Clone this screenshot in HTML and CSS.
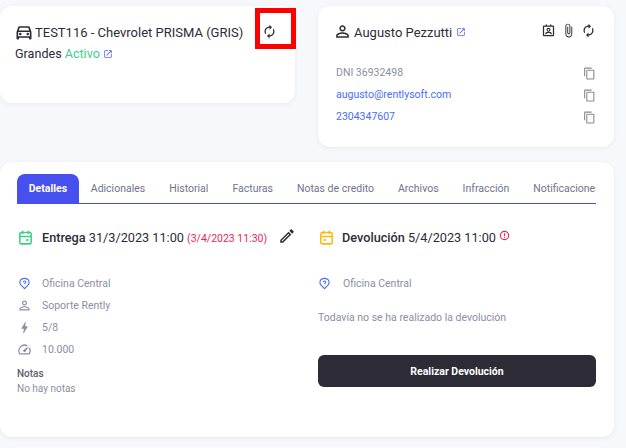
FILE: index.html
```html
<!DOCTYPE html>
<html lang="es">
<head>
    <meta charset="UTF-8">
    <title>Reserva</title>
    <link rel="stylesheet" href="styles.css">
</head>
<body>
    <div class="top-row">
        <div class="card car-card">
            <div class="car-title">
                <svg class="icon-car" viewBox="0 0 24 24"><path d="M18.92 6.01C18.72 5.42 18.16 5 17.5 5h-11c-.66 0-1.21.42-1.42 1.01L3 12v8c0 .55.45 1 1 1h1c.55 0 1-.45 1-1v-1h12v1c0 .55.45 1 1 1h1c.55 0 1-.45 1-1v-8l-2.08-5.99zM6.85 7h10.29l1.08 3.11H5.77L6.85 7zM19 17H5v-5h14v5z"/><circle cx="7.5" cy="14.5" r="1.5"/><circle cx="16.5" cy="14.5" r="1.5"/></svg>
                <span>TEST116 - Chevrolet PRISMA (GRIS)</span>
                <svg class="icon-sync" viewBox="0 0 24 24"><path d="M12 6v3l4-4-4-4v3c-4.42 0-8 3.58-8 8 0 1.57.46 3.03 1.24 4.26L6.7 14.8c-.45-.83-.7-1.79-.7-2.8 0-3.31 2.69-6 6-6zm6.76 1.74L17.3 9.2c.44.84.7 1.79.7 2.8 0 3.31-2.69 6-6 6v-3l-4 4 4 4v-3c4.42 0 8-3.58 8-8 0-1.57-.46-3.03-1.24-4.26z"/></svg>
            </div>
            <div class="car-sub">
                Grandes <span class="active">Activo</span>
                <svg class="icon-link" viewBox="0 0 24 24"><path d="M19 19H5V5h7V3H5c-1.11 0-2 .9-2 2v14c0 1.1.89 2 2 2h14c1.1 0 2-.9 2-2v-7h-2v7zM14 3v2h3.59l-9.83 9.83 1.41 1.41L19 6.41V10h2V3h-7z"/></svg>
            </div>
            <div class="marker"></div>
        </div>

        <div class="card client-card">
            <div class="client-head">
                <svg class="icon-person" viewBox="0 0 24 24"><path d="M12 5.9c1.16 0 2.1.94 2.1 2.1s-.94 2.1-2.1 2.1S9.9 9.16 9.9 8s.94-2.1 2.1-2.1m0 9c2.97 0 6.1 1.46 6.1 2.1v1.1H5.9V17c0-.64 3.13-2.1 6.1-2.1M12 4C9.79 4 8 5.79 8 8s1.79 4 4 4 4-1.79 4-4-1.79-4-4-4zm0 9c-2.67 0-8 1.34-8 4v3h16v-3c0-2.66-5.33-4-8-4z"/></svg>
                <span class="client-name">Augusto Pezzutti</span>
                <svg class="icon-link" viewBox="0 0 24 24"><path d="M19 19H5V5h7V3H5c-1.11 0-2 .9-2 2v14c0 1.1.89 2 2 2h14c1.1 0 2-.9 2-2v-7h-2v7zM14 3v2h3.59l-9.83 9.83 1.41 1.41L19 6.41V10h2V3h-7z"/></svg>
                <div class="client-actions">
                    <svg class="icon-action" viewBox="0 0 24 24"><path d="M19 4h-2.500V2.500h-2V4h-5V2.500h-2V4H5C3.900 4 3 4.900 3 6v13c0 1.100.9 2 2 2h14c1.100 0 2-.9 2-2V6c0-1.100-.9-2-2-2zm0 15H5V6h14v13z"/><g class="badge-person"><circle cx="12" cy="10.800" r="2.300"/><path d="M7.500 18c0-2 3-3 4.500-3s4.500 1 4.500 3"/></g></svg>
                    <svg class="icon-action" viewBox="0 0 24 24"><path d="M16.5 6v11.5c0 2.21-1.79 4-4 4s-4-1.79-4-4V5c0-1.38 1.12-2.5 2.5-2.5s2.5 1.12 2.5 2.5v10.5c0 .55-.45 1-1 1s-1-.45-1-1V6H10v9.5c0 1.38 1.12 2.5 2.5 2.5s2.5-1.12 2.5-2.5V5c0-2.21-1.79-4-4-4S7 2.79 7 5v12.5c0 3.04 2.46 5.5 5.5 5.5s5.5-2.46 5.5-5.5V6h-1.5z"/></svg>
                    <svg class="icon-action" viewBox="0 0 24 24"><path d="M12 6v3l4-4-4-4v3c-4.42 0-8 3.58-8 8 0 1.57.46 3.03 1.24 4.26L6.7 14.8c-.45-.83-.7-1.79-.7-2.8 0-3.31 2.69-6 6-6zm6.76 1.74L17.3 9.2c.44.84.7 1.79.7 2.8 0 3.31-2.69 6-6 6v-3l-4 4 4 4v-3c4.42 0 8-3.58 8-8 0-1.57-.46-3.03-1.24-4.26z"/></svg>
                </div>
            </div>
            <div class="client-row">
                <span>DNI 36932498</span>
                <svg class="icon-copy" viewBox="0 0 24 24"><path d="M16 1H4c-1.1 0-2 .9-2 2v14h2V3h12V1zm3 4H8c-1.1 0-2 .9-2 2v14c0 1.1.9 2 2 2h11c1.1 0 2-.9 2-2V7c0-1.1-.9-2-2-2zm0 16H8V7h11v14z"/></svg>
            </div>
            <div class="client-row blue">
                <span>augusto@rentlysoft.com</span>
                <svg class="icon-copy" viewBox="0 0 24 24"><path d="M16 1H4c-1.1 0-2 .9-2 2v14h2V3h12V1zm3 4H8c-1.1 0-2 .9-2 2v14c0 1.1.9 2 2 2h11c1.1 0 2-.9 2-2V7c0-1.1-.9-2-2-2zm0 16H8V7h11v14z"/></svg>
            </div>
            <div class="client-row blue">
                <span>2304347607</span>
                <svg class="icon-copy" viewBox="0 0 24 24"><path d="M16 1H4c-1.1 0-2 .9-2 2v14h2V3h12V1zm3 4H8c-1.1 0-2 .9-2 2v14c0 1.1.9 2 2 2h11c1.1 0 2-.9 2-2V7c0-1.1-.9-2-2-2zm0 16H8V7h11v14z"/></svg>
            </div>
        </div>
    </div>

    <div class="card main-card">
        <div class="tabs">
            <div class="tab selected">Detalles</div>
            <div class="tab">Adicionales</div>
            <div class="tab">Historial</div>
            <div class="tab">Facturas</div>
            <div class="tab">Notas de credito</div>
            <div class="tab">Archivos</div>
            <div class="tab">Infracción</div>
            <div class="tab">Notificaciones</div>
        </div>

        <div class="columns">
            <div class="col">
                <div class="date-line">
                    <svg class="icon-date green" viewBox="0 0 24 24"><path d="M6 5h12a2 2 0 0 1 2 2v12a2 2 0 0 1-2 2H6a2 2 0 0 1-2-2V7a2 2 0 0 1 2-2zM4 10.500h16M8 2.500V7M16 2.500V7"/><rect class="dot" x="13" y="14" width="3" height="3"/></svg>
                    <span><b>Entrega</b> 31/3/2023 11:00 <small class="late">(3/4/2023 11:30)</small></span>
                    <svg class="icon-edit" viewBox="0 0 24 24"><path d="M14.060 9.020l.92.92L5.920 19H5v-.92l9.060-9.060M17.660 3c-.25 0-.51.1-.7.29l-1.830 1.830 3.750 3.750 1.830-1.830c.39-.39.39-1.020 0-1.410l-2.340-2.340c-.2-.2-.45-.29-.71-.29zm-3.600 3.190L3 17.250V21h3.750L17.810 9.940l-3.750-3.750z"/></svg>
                </div>
                <div class="info-list">
                    <div class="info-row">
                        <svg class="icon-pin" viewBox="0 0 24 24"><path d="M12 21.500 6 15.500C3.500 13 3 10.500 3.600 8.500 4.500 5 8 2.500 12 2.500s7.500 2.500 8.400 6c.6 2-.1 4.500-2.400 7z"/><path d="M9.800 9.500c0-3 4.600-3 4.600 0 0 1.800-2.300 1.700-2.300 3.500M12.100 15.500v.5"/></svg>
                        <span>Oficina Central</span>
                    </div>
                    <div class="info-row">
                        <svg class="icon-info" viewBox="0 0 24 24"><path d="M12 5.900c1.160 0 2.100.94 2.100 2.100s-.94 2.100-2.100 2.100S9.900 9.160 9.900 8s.94-2.100 2.100-2.100m0 9c2.970 0 6.100 1.460 6.100 2.100v1.100H5.900V17c0-.64 3.130-2.100 6.100-2.100M12 4C9.790 4 8 5.790 8 8s1.790 4 4 4 4-1.790 4-4-1.790-4-4-4zm0 9c-2.670 0-8 1.340-8 4v3h16v-3c0-2.660-5.330-4-8-4z"/></svg>
                        <span>Soporte Rently</span>
                    </div>
                    <div class="info-row">
                        <svg class="icon-info" viewBox="0 0 24 24"><path d="M11 21h-1l1-7H7.500c-.88 0-.33-.75-.31-.78C8.480 10.940 10.420 7.540 13.010 3h1l-1 7h3.510c.4 0 .62.19.4.66C12.970 17.550 11 21 11 21z"/></svg>
                        <span>5/8</span>
                    </div>
                    <div class="info-row">
                        <svg class="icon-info" viewBox="0 0 24 24"><path d="M20.380 8.570l-1.230 1.850a8 8 0 0 1-.22 7.580H5.070A8 8 0 0 1 15.580 6.850l1.850-1.230A10 10 0 0 0 3.350 19a2 2 0 0 0 1.720 1h13.850a2 2 0 0 0 1.740-1 10 10 0 0 0-.27-10.440zm-9.790 6.840a2 2 0 0 0 2.830 0l5.660-8.490-8.490 5.660a2 2 0 0 0 0 2.830z"/></svg>
                        <span>10.000</span>
                    </div>
                </div>
                <div class="notes">
                    <div class="notes-title">Notas</div>
                    <div>No hay notas</div>
                </div>
            </div>

            <div class="col col-return">
                <div class="date-line">
                    <svg class="icon-date yellow" viewBox="0 0 24 24"><path d="M6 5h12a2 2 0 0 1 2 2v12a2 2 0 0 1-2 2H6a2 2 0 0 1-2-2V7a2 2 0 0 1 2-2zM4 10.500h16M8 2.500V7M16 2.500V7"/><rect class="dot" x="8" y="14" width="3" height="3"/></svg>
                    <span><b>Devolución</b> 5/4/2023 11:00</span>
                    <svg class="icon-alert" viewBox="0 0 24 24"><circle cx="12" cy="12" r="9"/><path d="M12 7v6.500M12 16v1.500"/></svg>
                </div>
                <div class="info-list">
                    <div class="info-row">
                        <svg class="icon-pin" viewBox="0 0 24 24"><path d="M12 21.500 6 15.500C3.500 13 3 10.500 3.600 8.500 4.500 5 8 2.500 12 2.500s7.500 2.500 8.400 6c.6 2-.1 4.500-2.400 7z"/><path d="M9.800 9.500c0-3 4.600-3 4.600 0 0 1.800-2.300 1.700-2.300 3.500M12.100 15.500v.5"/></svg>
                        <span>Oficina Central</span>
                    </div>
                </div>
                <p class="pending">Todavía no se ha realizado la devolución</p>
                <button class="return-btn">Realizar Devolución</button>
            </div>
        </div>
    </div>
</body>
</html>
```

FILE: styles.css
```css
html, body {
    margin: 0;
    height: 448px;
    overflow: hidden;
}

body {
    padding: 6px 12px 0 0;
    box-sizing: border-box;
    background-color: #f6f8fb;
    color: #2d2c36;
    font-family: Roboto, sans-serif;
    font-size: 10.5px;
}

svg {
    display: block;
    flex-shrink: 0;
    fill: currentColor;
}

.card {
    background-color: #fff;
    border-radius: 12px;
    box-shadow: 0 1px 4px rgba(60, 70, 100, 0.08);
}

.top-row {
    display: flex;
    align-items: flex-start;
    gap: 23px;
}

/* tarjeta del auto */
.car-card {
    position: relative;
    box-sizing: border-box;
    width: 295px;
    height: 97px;
    padding: 17px 0 0 15px;
}

.car-title {
    display: flex;
    align-items: center;
    font-size: 13px;
    line-height: 18px;
}

.icon-car {
    width: 20px;
    height: 20px;
    margin: -1px 1.5px 0 -1.5px;
}

.icon-sync {
    width: 15px;
    height: 15px;
    margin: -2px 0 0 19px;
}

.car-sub {
    display: flex;
    align-items: center;
    gap: 3px;
    margin-top: 3px;
    font-size: 12.6px;
    line-height: 18px;
}

.active {
    color: #3ecf8e;
}

.icon-link {
    width: 10px;
    height: 10px;
    color: #6366f1;
}

.marker {
    position: absolute;
    left: 255px;
    top: 2px;
    width: 31px;
    height: 31px;
    border: 5px solid #ff0000;
}

/* tarjeta del cliente */
.client-card {
    box-sizing: border-box;
    width: 296px;
    height: 141px;
    padding: 17px 18px 0 18px;
}

.client-head {
    display: flex;
    align-items: center;
    height: 18px;
    margin-bottom: 20px;
}

.icon-person {
    width: 19px;
    height: 19px;
    margin: -2px 2px 0 -3px;
}

.client-name {
    font-size: 13px;
    margin-right: 4px;
}

.client-actions {
    display: flex;
    gap: 5px;
    margin: -3px 0 0 auto;
}

.icon-action {
    width: 15px;
    height: 15px;
}

.badge-person {
    fill: none;
    stroke: currentColor;
    stroke-width: 1.8;
}

.client-row {
    display: flex;
    justify-content: space-between;
    align-items: center;
    height: 22px;
    color: #8a8fa3;
}

.client-row.blue {
    color: #4a6cf7;
}

.icon-copy {
    width: 13px;
    height: 13px;
    color: #8a8a94;
    margin-top: 3px;
}

/* tarjeta principal */
.main-card {
    box-sizing: border-box;
    height: 275px;
    margin-top: 15px;
    padding: 12px 18px 0 17px;
}

.tabs {
    display: flex;
    height: 29px;
    border-bottom: 1px solid #4650e8;
    overflow: hidden;
}

.tab {
    flex-shrink: 0;
    padding: 0 12px;
    line-height: 29px;
    color: #70748a;
}

.tab.selected {
    padding: 0 11.75px;
    background-color: #4650ee;
    border-radius: 8px 8px 0 0;
    color: #fff;
    font-weight: 700;
}

.columns {
    display: grid;
    grid-template-columns: 1fr 278px;
    padding-top: 22px;
}

.date-line {
    display: flex;
    align-items: center;
    height: 22px;
    font-size: 12.7px;
}

.date-line b {
    font-weight: 500;
}

.late {
    font-size: 10.5px;
    color: #e8255f;
}

.icon-date {
    width: 17px;
    height: 17px;
    margin-right: 8px;
    fill: none;
    stroke-width: 2.2;
}

.col-return .icon-date {
    margin-right: 7px;
}

.icon-date .dot {
    fill: currentColor;
    stroke: none;
}

.green {
    color: #3ecf8e;
    stroke: #3ecf8e;
}

.yellow {
    color: #fdb913;
    stroke: #fdb913;
}

.icon-edit {
    width: 18px;
    height: 18px;
    margin: -3px 0 0 10.5px;
}

.icon-alert {
    width: 11px;
    height: 11px;
    margin: -3px 0 0 3px;
    fill: none;
    stroke: #e8255f;
    stroke-width: 2.5;
}

.info-list {
    padding-top: 24px;
}

.info-row {
    display: flex;
    align-items: center;
    height: 22px;
    color: #8a8fa3;
}

.icon-pin {
    width: 13px;
    height: 13px;
    margin: 0 11px 0 1px;
    fill: none;
    stroke: #4a6cf7;
    stroke-width: 2;
}

.col-return .icon-pin {
    margin: 0 12px 0 0;
}

.icon-info {
    width: 15px;
    height: 15px;
    margin: 0 10.5px 0 -0.5px;
}

.notes {
    padding-top: 6px;
    font-size: 10px;
    line-height: 15px;
    color: #8a8fa3;
}

.notes-title {
    font-weight: 500;
    color: #5a5d6c;
}

.pending {
    margin: 17px 0 0;
    line-height: 14px;
    color: #8a8fa3;
}

.return-btn {
    display: block;
    width: 100%;
    height: 32px;
    margin-top: 30px;
    border: none;
    border-radius: 6px;
    background-color: #2d2c36;
    color: #fff;
    font-family: Roboto, sans-serif;
    font-size: 10.5px;
    font-weight: 700;
}
```
